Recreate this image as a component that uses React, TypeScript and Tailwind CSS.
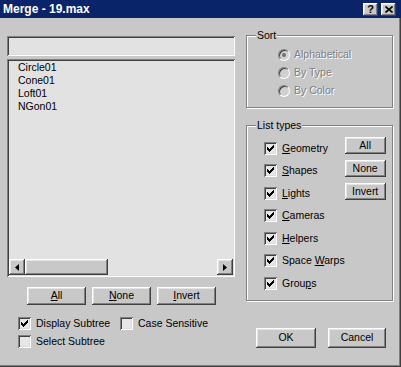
import React from 'react';

// classic 3D bevels
const raised =
  'shadow-[inset_-1px_-1px_0_#404040,inset_1px_1px_0_#ffffff,inset_-2px_-2px_0_#808080,inset_2px_2px_0_#e4e4e4]';
const sunken =
  'shadow-[inset_1px_1px_0_#808080,inset_-1px_-1px_0_#ffffff,inset_2px_2px_0_#404040,inset_-2px_-2px_0_#dcdcdc]';
const etched = 'border border-[#808080] shadow-[1px_1px_0_#ffffff,inset_1px_1px_0_#ffffff]';

type BtnProps = { children?: React.ReactNode; className?: string };

const Btn = ({ children, className = '' }: BtnProps) => (
  <div className={`flex items-center justify-center bg-[#c8c8c8] text-black ${raised} ${className}`}>
    {children}
  </div>
);

const Check = ({ checked }: { checked?: boolean }) => (
  <span className={`flex w-[13px] h-[13px] shrink-0 bg-[#e6e6e6] ${sunken}`}>
    {checked && (
      <svg width="13" height="13" viewBox="0 0 13 13">
        <path
          d="M3 5h1v3H3zM4 6h1v3H4zM5 7h1v3H5zM6 6h1v3H6zM7 5h1v3H7zM8 4h1v3H8zM9 3h1v3H9z"
          fill="#000"
        />
      </svg>
    )}
  </span>
);

const CheckRow = ({ label, checked, className = '' }: { label: React.ReactNode; checked?: boolean; className?: string }) => (
  <div className={`flex items-center gap-[5px] ${className}`}>
    <Check checked={checked} />
    <span className="leading-[13px] whitespace-nowrap">{label}</span>
  </div>
);

const Radio = ({ label, checked }: { label: string; checked?: boolean }) => (
  <div className="flex items-center h-[18px] gap-[4px]">
    <span className="flex items-center justify-center w-[12px] h-[12px] rounded-full border border-t-[#808080] border-l-[#808080] border-r-white border-b-white bg-[#d0d0d0] shadow-[inset_1px_1px_0_#404040]">
      {checked && <span className="w-[4px] h-[4px] rounded-full bg-[#707070]" />}
    </span>
    <span className="text-[#808080] [text-shadow:1px_1px_0_#ffffff]">{label}</span>
  </div>
);

const Arrow = ({ dir }: { dir: 'left' | 'right' }) => (
  <svg width="4" height="7" viewBox="0 0 4 7">
    <path d={dir === 'left' ? 'M4 0v7L0 3.5z' : 'M0 0v7l4-3.5z'} fill="#000" />
  </svg>
);

const App = () => {
  const items = ['Circle01', 'Cone01', 'Loft01', 'NGon01'];

  const types: { label: React.ReactNode }[] = [
    { label: <><u>G</u>eometry</> },
    { label: <><u>S</u>hapes</> },
    { label: <><u>L</u>ights</> },
    { label: <><u>C</u>ameras</> },
    { label: <><u>H</u>elpers</> },
    { label: <>Space <u>W</u>arps</> },
    { label: <>Grou<u>p</u>s</> },
  ];

  return (
    <div className="w-[401px] h-[367px] bg-[#c8c8c8] text-black text-[10.5px] font-['Liberation_Sans',Arial,sans-serif] shadow-[inset_-1px_-1px_0_#404040,inset_-2px_-2px_0_#808080] overflow-hidden">
      {/* Title bar */}
      <div className="h-[18px] bg-[#0a246a] flex items-center pl-[3px] pr-[5px]">
        <span className="text-white font-bold text-[12px] leading-none">Merge - 19.max</span>
        <div className="ml-auto flex gap-[3px]">
          <Btn className="w-[15px] h-[13px] font-bold text-[11px] leading-none">?</Btn>
          <Btn className="w-[15px] h-[13px]">
            <svg width="8" height="7" viewBox="0 0 8 7">
              <path d="M0.5 0.5l7 6M7.5 0.5l-7 6" stroke="#000" strokeWidth="1.6" />
            </svg>
          </Btn>
        </div>
      </div>

      <div className="flex pl-[7px] pt-[18px]">
        {/* Left column */}
        <div className="w-[228px] flex flex-col">
          <div className={`h-[20px] bg-[#e2e2e2] ${sunken}`} />

          <div className={`mt-[3px] h-[218px] flex flex-col p-[2px] bg-[#e2e2e2] ${sunken}`}>
            <div className="flex-1 pl-[9px] leading-[13px]">
              {items.map((it) => (
                <div key={it}>{it}</div>
              ))}
            </div>
            <div className="h-[16px] flex">
              <Btn className="w-[16px] h-[16px]">
                <Arrow dir="left" />
              </Btn>
              <Btn className="w-[83px] h-[16px]" />
              <div className="flex-1 bg-[#e2e2e2]" />
              <Btn className="w-[16px] h-[16px]">
                <Arrow dir="right" />
              </Btn>
            </div>
          </div>

          <div className="mt-[10px] flex gap-[6px] pl-[20px]">
            <Btn className="w-[59px] h-[18px]"><span><u>A</u>ll</span></Btn>
            <Btn className="w-[59px] h-[18px]"><span><u>N</u>one</span></Btn>
            <Btn className="w-[59px] h-[18px]"><span><u>I</u>nvert</span></Btn>
          </div>

          <div className="mt-[12px] flex pl-[11px]">
            <CheckRow label="Display Subtree" checked className="w-[102px]" />
            <CheckRow label="Case Sensitive" />
          </div>
          <div className="mt-[5px] flex pl-[11px]">
            <CheckRow label="Select Subtree" />
          </div>
        </div>

        {/* Right column */}
        <div className="ml-[11px] w-[147px] flex flex-col">
          <div className={`relative -mt-[1px] h-[73px] ${etched} pl-[31px] pt-[10px]`}>
            <span className="absolute left-[9px] -top-[7px] px-[1px] bg-[#c8c8c8] leading-[13px]">Sort</span>
            <Radio label="Alphabetical" checked />
            <Radio label="By Type" />
            <Radio label="By Color" />
          </div>

          <div className={`relative mt-[17px] h-[176px] ${etched} flex pl-[17px] pr-[11px] pt-[11px]`}>
            <span className="absolute left-[9px] -top-[7px] px-[1px] bg-[#c8c8c8] leading-[13px]">List types</span>
            <div className="flex flex-col">
              {types.map((t, i) => (
                <div key={i} className="h-[22.5px] flex items-center">
                  <CheckRow label={t.label} checked />
                </div>
              ))}
            </div>
            <div className="ml-auto flex flex-col gap-[6px]">
              <Btn className="w-[41px] h-[17px]">All</Btn>
              <Btn className="w-[41px] h-[17px]">None</Btn>
              <Btn className="w-[41px] h-[17px]">Invert</Btn>
            </div>
          </div>

          <div className="mt-[27px] flex pl-[10px] gap-[12px]">
            <Btn className="w-[60px] h-[20px]">OK</Btn>
            <Btn className="w-[58px] h-[20px]">Cancel</Btn>
          </div>
        </div>
      </div>
    </div>
  );
};

export default App;
